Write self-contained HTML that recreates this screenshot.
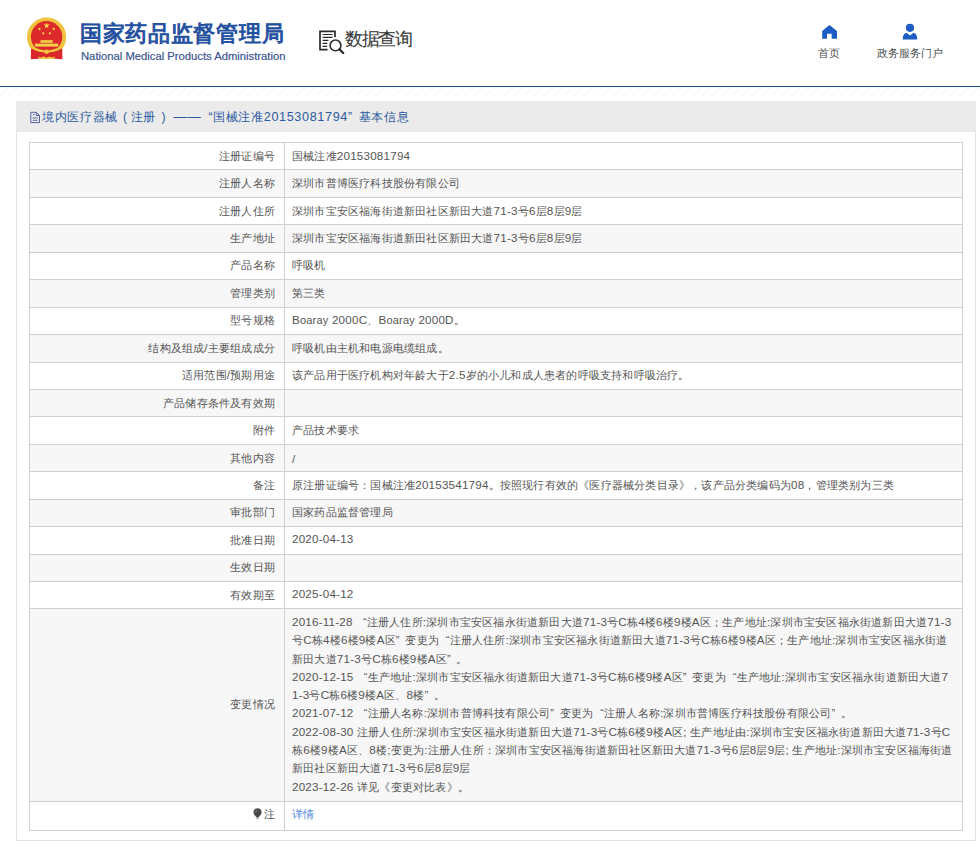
<!DOCTYPE html>
<html><head><meta charset="utf-8">
<style>
*{margin:0;padding:0;box-sizing:border-box}
html,body{width:980px;height:847px;overflow:hidden;background:#fff;font-family:"Liberation Sans",sans-serif;color:#333}
.hdr{position:absolute;left:0;top:0;width:980px;height:87px;background:#fff;border-bottom:1px solid #1b4a80}
.strp{position:absolute;left:0;top:87px;width:980px;height:9px;background:repeating-linear-gradient(135deg,#fff 0,#fff 5px,#f9fafd 5px,#f9fafd 7px)}
.emb{position:absolute;left:24px;top:13px}
.t1{position:absolute;left:80px;top:19px;font-size:22px;letter-spacing:0.7px;color:#2450a0;white-space:nowrap;-webkit-text-stroke:1px #2450a0}
.t2{position:absolute;left:81px;top:49.8px;font-size:11.25px;color:#3c5590;white-space:nowrap;-webkit-text-stroke:0.2px #3c5590}
.q{position:absolute;left:314px;top:26px}
.qt{position:absolute;left:345px;top:27px;font-size:18px;letter-spacing:-1.5px;color:#383838;-webkit-text-stroke:0.1px #383838;white-space:nowrap}
.nav{position:absolute;text-align:center;font-size:11px;color:#505050;white-space:nowrap}
.panel{position:absolute;left:16px;top:101px;width:960px;height:740px;border:1px solid #e3e3e3;background:#fff}
.ph{position:absolute;left:-1px;top:-1px;width:960px;height:31px;background:#ebebeb}
.pt{position:absolute;left:26px;top:8px;font-size:12px;letter-spacing:0.65px;color:#2b5aa0;white-space:nowrap}
.pt .n{font-size:12.6px}
.pl{padding-left:5.2px;padding-right:3px}.pr{padding-left:5.5px;padding-right:7.2px}.dd{font-size:13.4px}
.hlq{padding-left:3px}.hrq{padding-right:2px}
.pi{position:absolute;left:13px;top:10px}
table{position:absolute;left:12px;top:40px;width:934px;table-layout:fixed;border-collapse:collapse;font-size:11px;letter-spacing:0.2px;color:#555}
td{border:1px solid #d0d0d0;height:27.44px;padding:0 7px;vertical-align:middle;white-space:nowrap}
td .n{font-size:11.65px}
td .w{font-size:11px}
td.l{text-align:right;padding-right:9px}
tr:nth-child(even) td{background:#f7f7f7}
.chg td{height:193px;line-height:18.3px;padding-bottom:2px}
.dt td:last-child{padding-bottom:3px}
.last td{height:28.6px;padding-bottom:3px}
.lq{padding-left:6.8px}.rq{padding-right:5.6px}
.bulb{vertical-align:-1px;margin-right:2px}
a{color:#4a86d8;text-decoration:none}

</style></head><body>
<div class="hdr">
  <svg class="emb" width="46" height="50" viewBox="24 13 46 50">
    <circle cx="46.6" cy="37" r="19.6" fill="#f0c23e"/>
    <circle cx="46.6" cy="36.8" r="15.7" fill="#dc2a2a"/>
    <polygon points="46.6,22.4 47.4,24.6 49.7,24.6 47.9,26 48.5,28.2 46.6,26.9 44.7,28.2 45.3,26 43.5,24.6 45.8,24.6" fill="#f6d04a"/>
    <circle cx="39.5" cy="29" r="1.15" fill="#f6d04a"/><circle cx="53.7" cy="29" r="1.15" fill="#f6d04a"/>
    <circle cx="43.3" cy="33.3" r="1.15" fill="#f6d04a"/><circle cx="49.9" cy="33.3" r="1.15" fill="#f6d04a"/>
    <rect x="40.5" y="40.2" width="12.2" height="2.6" fill="#f6d04a"/>
    <rect x="35" y="43.6" width="23.2" height="3" fill="#f6d04a"/>
    <path d="M31 48.2 Q46.6 56 62.2 48.2 L62.4 59.3 Q46.6 57.8 30.8 59.3 Z" fill="#d9262b"/>
    <path d="M30.6 46.6 Q46.6 56.6 62.6 46.6" stroke="#f0c23e" stroke-width="2.3" fill="none"/>
    <circle cx="46.6" cy="51.7" r="2.3" fill="#f0c23e"/>
    <path d="M38.4 56.2 L40.6 57.6 L44 56.5 L46.6 57.8 L49.2 56.5 L52.6 57.6 L54.8 56.2 L54.3 58.9 L38.9 58.9 Z" fill="#f0c23e"/>
  </svg>
  <div class="t1">国家药品监督管理局</div>
  <div class="t2">National Medical Products Administration</div>
  <svg class="q" width="36" height="32" viewBox="314 26 36 32">
    <path d="M327.6 49.7 H320 V31.3 H335 V37.2" fill="none" stroke="#2a2a2e" stroke-width="1.7"/>
    <path d="M322.6 34.5 H332.6 M322.6 37.3 H332.6 M322.6 40.4 H328.5 M322.6 43.4 H327.3 M322.6 46.4 H327.2" stroke="#2a2a2e" stroke-width="1.15"/>
    <circle cx="335.5" cy="45.4" r="5.4" fill="none" stroke="#2a2a2e" stroke-width="1.6"/>
    <path d="M339.5 49.4 L343.2 53" stroke="#2a2a2e" stroke-width="2.3" stroke-linecap="round"/>
  </svg>
  <div class="qt">数据查询</div>
  <svg style="position:absolute;left:820px;top:23px" width="20" height="18" viewBox="820 23 20 18"><path d="M829.4 25 L837 31 V38.8 H831.7 V33.8 H827 V38.8 H822.2 V31 Z" fill="#1d5cc4"/></svg>
  <div class="nav" style="left:817px;top:46px;width:24px">首页</div>
  <svg style="position:absolute;left:900px;top:22px" width="20" height="19" viewBox="900 22 20 19"><circle cx="910" cy="27.8" r="4.1" fill="#1d5cc4"/><path d="M902.7 39.4 Q902.8 33.5 906.5 32.7 L910 35.6 L913.5 32.7 Q917.2 33.5 917.3 39.4 Z" fill="#1d5cc4"/></svg>
  <div class="nav" style="left:876px;top:46px;width:67px">政务服务门户</div>
</div>

<div class="strp"></div>
<div class="panel">
  <div class="ph"><svg class="pi" width="12" height="14" viewBox="29 111 12 14"><path d="M30.8 112.3 H36.3 L39.5 115.5 V122.6 H30.8 Z M36.3 112.3 V115.5 H39.5" fill="none" stroke="#4d5c9c" stroke-width="0.95" stroke-linejoin="round"/><path d="M32.6 117.9 H37.6 M32.6 120.3 H37.6 M33 114.6 H34.6" stroke="#4d5c9c" stroke-width="0.9"/></svg><div class="pt">境内医疗器械<span class="pl">(</span>注册<span class="pr">)</span><span class="dd">——</span> <span class="hlq">“</span>国械注准<span class="n">20153081794</span><span class="hrq">”</span> 基本信息</div></div>
  <table><colgroup><col style="width:255px"><col></colgroup>
<tr><td class="l">注册证编号</td><td>国械注准<span class="n">20153081794</span></td></tr>
<tr><td class="l">注册人名称</td><td>深圳市普博医疗科技股份有限公司</td></tr>
<tr><td class="l">注册人住所</td><td>深圳市宝安区福海街道新田社区新田大道<span class="n">71-3</span>号<span class="n">6</span>层<span class="n">8</span>层<span class="n">9</span>层</td></tr>
<tr><td class="l">生产地址</td><td>深圳市宝安区福海街道新田社区新田大道<span class="n">71-3</span>号<span class="n">6</span>层<span class="n">8</span>层<span class="n">9</span>层</td></tr>
<tr><td class="l">产品名称</td><td>呼吸机</td></tr>
<tr><td class="l">管理类别</td><td>第三类</td></tr>
<tr><td class="l">型号规格</td><td><span class="n">B</span><span class="w">oaray</span><span class="n"> 2000C</span>、<span class="n">B</span><span class="w">oaray</span><span class="n"> 2000D</span>。</td></tr>
<tr><td class="l">结构及组成<span class="n">/</span>主要组成成分</td><td>呼吸机由主机和电源电缆组成。</td></tr>
<tr><td class="l">适用范围<span class="n">/</span>预期用途</td><td>该产品用于医疗机构对年龄大于<span class="n">2.5</span>岁的小儿和成人患者的呼吸支持和呼吸治疗。</td></tr>
<tr><td class="l">产品储存条件及有效期</td><td></td></tr>
<tr><td class="l">附件</td><td>产品技术要求</td></tr>
<tr><td class="l">其他内容</td><td><span class="n">/</span></td></tr>
<tr><td class="l">备注</td><td>原注册证编号：国械注准<span class="n">20153541794</span>。按照现行有效的《医疗器械分类目录》，该产品分类编码为<span class="n">08</span>，管理类别为三类</td></tr>
<tr><td class="l">审批部门</td><td>国家药品监督管理局</td></tr>
<tr class="dt"><td class="l">批准日期</td><td><span class="n">2020-04-13</span></td></tr>
<tr><td class="l">生效日期</td><td></td></tr>
<tr class="dt"><td class="l">有效期至</td><td><span class="n">2025-04-12</span></td></tr>
<tr class="chg"><td class="l">变更情况</td><td><span class="n">2016-11-28 </span><span class="lq">“</span>注册人住所<span class="n">:</span>深圳市宝安区福永街道新田大道<span class="n">71-3</span>号<span class="n">C</span>栋<span class="n">4</span>楼<span class="n">6</span>楼<span class="n">9</span>楼<span class="n">A</span>区；生产地址<span class="n">:</span>深圳市宝安区福永街道新田大道<span class="n">71-3</span><br>号<span class="n">C</span>栋<span class="n">4</span>楼<span class="n">6</span>楼<span class="n">9</span>楼<span class="n">A</span>区<span class="rq">”</span>变更为<span class="lq">“</span>注册人住所<span class="n">:</span>深圳市宝安区福永街道新田大道<span class="n">71-3</span>号<span class="n">C</span>栋<span class="n">6</span>楼<span class="n">9</span>楼<span class="n">A</span>区；生产地址<span class="n">:</span>深圳市宝安区福永街道<br>新田大道<span class="n">71-3</span>号<span class="n">C</span>栋<span class="n">6</span>楼<span class="n">9</span>楼<span class="n">A</span>区<span class="rq">”</span>。<br><span class="n">2020-12-15 </span><span class="lq">“</span>生产地址<span class="n">:</span>深圳市宝安区福永街道新田大道<span class="n">71-3</span>号<span class="n">C</span>栋<span class="n">6</span>楼<span class="n">9</span>楼<span class="n">A</span>区<span class="rq">”</span>变更为<span class="lq">“</span>生产地址<span class="n">:</span>深圳市宝安区福永街道新田大道<span class="n">7</span><br><span class="n">1-3</span>号<span class="n">C</span>栋<span class="n">6</span>楼<span class="n">9</span>楼<span class="n">A</span>区、<span class="n">8</span>楼<span class="rq">”</span>。<br><span class="n">2021-07-12 </span><span class="lq">“</span>注册人名称<span class="n">:</span>深圳市普博科技有限公司<span class="rq">”</span>变更为<span class="lq">“</span>注册人名称<span class="n">:</span>深圳市普博医疗科技股份有限公司<span class="rq">”</span>。<br><span class="n">2022-08-30 </span>注册人住所<span class="n">:</span>深圳市宝安区福永街道新田大道<span class="n">71-3</span>号<span class="n">C</span>栋<span class="n">6</span>楼<span class="n">9</span>楼<span class="n">A</span>区<span class="n">; </span>生产地址由<span class="n">:</span>深圳市宝安区福永街道新田大道<span class="n">71-3</span>号<span class="n">C</span><br>栋<span class="n">6</span>楼<span class="n">9</span>楼<span class="n">A</span>区、<span class="n">8</span>楼<span class="n">;</span>变更为<span class="n">:</span>注册人住所：深圳市宝安区福海街道新田社区新田大道<span class="n">71-3</span>号<span class="n">6</span>层<span class="n">8</span>层<span class="n">9</span>层<span class="n">; </span>生产地址<span class="n">:</span>深圳市宝安区福海街道<br>新田社区新田大道<span class="n">71-3</span>号<span class="n">6</span>层<span class="n">8</span>层<span class="n">9</span>层<br><span class="n">2023-12-26 </span>详见《变更对比表》。</td></tr>
<tr class="last"><td class="l"><svg class="bulb" width="9" height="11" viewBox="0 0 9 11"><circle cx="4.5" cy="4.2" r="4" fill="#4a4a4a"/><path d="M2.2 6.5 L6.8 6.5 L6 9.2 L3 9.2 Z" fill="#4a4a4a"/><rect x="3" y="9.6" width="3" height="1" fill="#888"/><circle cx="3.2" cy="3" r="1" fill="#777"/></svg>注</td><td><a>详情</a></td></tr>
  </table>
</div>
</body></html>
